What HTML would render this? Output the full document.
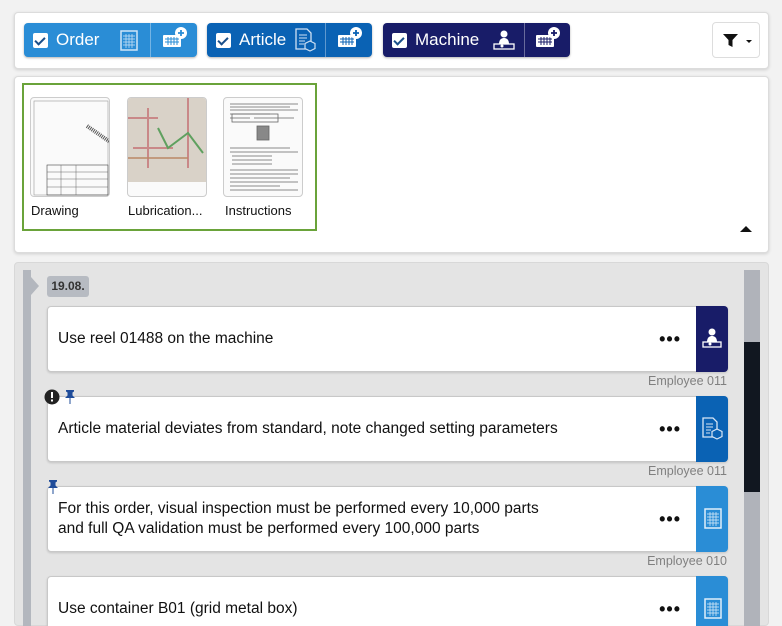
<!DOCTYPE html><html><head><style>
*{box-sizing:border-box;margin:0;padding:0}
html,body{width:782px;height:626px;overflow:hidden}
body{background:#f2f2f2;font-family:"Liberation Sans",sans-serif;position:relative}
.a{position:absolute}
.card{background:#fff;border:1px solid #dcdcdc;border-radius:4px;box-shadow:0 1px 3px rgba(0,0,0,.15)}
.btn{position:absolute;top:23px;height:34px;border-radius:4px;color:#fff;font-size:17px;box-shadow:0 1px 2px rgba(0,0,0,.3)}
.btn .cb{position:absolute;left:9px;top:10px;width:15px;height:15px;background:#fff;border-radius:2px}
.btn .cb:after{content:"";position:absolute;left:4px;top:2px;width:4px;height:8px;border:solid #1a4f8a;border-width:0 2px 2px 0;transform:rotate(45deg)}
.btn .lb{position:absolute;left:32px;top:7px}
.btn .sp{position:absolute;top:0;bottom:0;width:1px;background:rgba(255,255,255,.35)}
.thumb{position:absolute;top:97px;width:80px;height:100px;border:1px solid #ccc;border-radius:4px;background:#fafafa;overflow:hidden}
.tl{position:absolute;top:203px;font-size:13px;color:#111}
.note{position:absolute;left:47px;width:681px;height:66px;background:#fff;border:1px solid #c8c8c8;border-radius:4px;box-shadow:0 1px 2px rgba(0,0,0,.15);font-size:15.5px;color:#111}
.note .t{position:absolute;left:10px;top:50%;transform:translateY(-50%);line-height:20px}
.note .d{position:absolute;right:46px;top:22px;font-size:18px;letter-spacing:1px;font-weight:bold}
.note .s{position:absolute;right:-1px;top:-1px;bottom:-1px;width:32px;border-radius:0 4px 4px 0}
.emp{position:absolute;right:55px;font-size:12.5px;color:#808080}
.pin{z-index:5}
</style></head><body>
<div class="a card" style="left:14px;top:12px;width:755px;height:57px"></div>
<div class="btn" style="left:24px;width:173px;background:#2a8dd6"><div class="cb"></div><div class="lb">Order</div>
<svg class="a" style="left:96px;top:7px" width="18" height="21"><rect x="1" y="1" width="16" height="19" fill="none" stroke="#cfe5f7" stroke-width="1.5"/><path d="M3 6h12M3 9h12M3 12h12M3 15h12M6 4v14M9 4v14M12 4v14" stroke="#cfe5f7" stroke-width=".7"/></svg>
<div class="sp" style="left:126px"></div>
<svg class="a" style="left:138px;top:3px" width="26" height="24"><rect x="1" y="9" width="18" height="12" rx="1" fill="#fff"/><path d="M3 13h14M3 16h14M6 11v8M9 11v8M12 11v8M15 11v8" stroke="#2a8dd6" stroke-width="1"/><circle cx="19" cy="7" r="6" fill="#fff"/><path d="M19 4v6M16 7h6" stroke="#2a8dd6" stroke-width="1.8"/></svg></div>
<div class="btn" style="left:207px;width:165px;background:#0a62b4"><div class="cb"></div><div class="lb">Article</div>
<svg class="a" style="left:88px;top:5px" width="22" height="24"><path d="M1 1h11l4 4v16H1z" fill="none" stroke="#cfe0f3" stroke-width="1.3"/><path d="M4 7h8M4 10h8M4 13h6M4 16h5" stroke="#cfe0f3"/><path d="M15 13l5 2.5v5L15 23l-5-2.5v-5z" fill="#0a62b4" stroke="#cfe0f3" stroke-width="1.2"/></svg>
<div class="sp" style="left:118px"></div>
<svg class="a" style="left:130px;top:3px" width="26" height="24"><rect x="1" y="9" width="18" height="12" rx="1" fill="#fff"/><path d="M3 13h14M3 16h14M6 11v8M9 11v8M12 11v8M15 11v8" stroke="#0a62b4" stroke-width="1"/><circle cx="19" cy="7" r="6" fill="#fff"/><path d="M19 4v6M16 7h6" stroke="#0a62b4" stroke-width="1.8"/></svg></div>
<div class="btn" style="left:383px;width:187px;background:#181c68"><div class="cb"></div><div class="lb">Machine</div>
<svg class="a" style="left:110px;top:6px" width="22" height="22"><circle cx="11" cy="5" r="3.5" fill="#fff"/><path d="M6 15c0-5 3-6 5-6s5 1 5 6z" fill="#fff"/><rect x="1" y="15" width="20" height="5" fill="none" stroke="#fff" stroke-width="1.3"/><circle cx="9" cy="17" r="1.5" fill="#fff"/></svg>
<div class="sp" style="left:141px"></div>
<svg class="a" style="left:152px;top:3px" width="26" height="24"><rect x="1" y="9" width="18" height="12" rx="1" fill="#fff"/><path d="M3 13h14M3 16h14M6 11v8M9 11v8M12 11v8M15 11v8" stroke="#181c68" stroke-width="1"/><circle cx="19" cy="7" r="6" fill="#fff"/><path d="M19 4v6M16 7h6" stroke="#181c68" stroke-width="1.8"/></svg></div>
<div class="a" style="left:712px;top:22px;width:48px;height:36px;border:1px solid #ddd;border-radius:4px;background:#fff">
<svg class="a" style="left:10px;top:11px" width="30" height="14"><path d="M0 0h15l-5.5 6v7l-4-2V6z" fill="#111"/><path d="M23 6h6l-3 3z" fill="#111"/></svg></div>

<div class="a card" style="left:14px;top:76px;width:755px;height:177px"></div>
<div class="a" style="left:22px;top:83px;width:295px;height:148px;border:2px solid #6aa33a"></div>
<div class="thumb" style="left:30px"><svg width="80" height="100"><rect x="3" y="3" width="74" height="94" fill="none" stroke="#999" stroke-width=".6"/><path d="M56 28l26 18" stroke="#555" stroke-width="4" stroke-dasharray="1 1"/><rect x="16" y="67" width="61" height="30" fill="none" stroke="#444" stroke-width=".6"/><path d="M16 74h61M16 81h61M16 89h61M30 67v30M45 67v30" stroke="#666" stroke-width=".5"/></svg></div>
<div class="thumb" style="left:127px"><svg width="80" height="100"><rect width="80" height="84" fill="#d9d2c8"/><path d="M0 20h30M20 10v60M5 50h40M60 0v70" stroke="#c98888" stroke-width="2"/><path d="M30 30l10 20 20 -15 15 20" stroke="#5fa05f" stroke-width="2" fill="none"/><path d="M0 60h60" stroke="#b86" stroke-width="1.5"/></svg></div>
<div class="thumb" style="left:223px"><svg width="80" height="100"><g stroke="#666" stroke-width=".8"><path d="M6 6h68M6 9h60M6 12h68M6 16h40M6 20h20M30 20h20M50 20h20"/><rect x="8" y="16" width="46" height="8" fill="none"/><rect x="33" y="28" width="12" height="14" fill="#888"/><path d="M6 50h60M6 54h68M8 58h40M8 62h40M8 66h40M6 72h68M6 76h68M6 80h60M6 84h68M6 88h50M6 92h68"/></g></svg></div>
<div class="tl" style="left:31px">Drawing</div>
<div class="tl" style="left:128px">Lubrication...</div>
<div class="tl" style="left:225px">Instructions</div>
<svg class="a" style="left:739px;top:224px" width="14" height="10"><path d="M1 8L7 2l6 6z" fill="#111"/></svg>

<div class="a" style="left:14px;top:262px;width:755px;height:364px;background:#e4e4e4;border:1px solid #d8d8d8;border-radius:4px"></div>
<div class="a" style="left:23px;top:270px;width:8px;height:356px;background:#b3b7be"></div>
<svg class="a" style="left:31px;top:277px" width="10" height="18"><path d="M0 0l8 9-8 9z" fill="#b3b7be"/></svg>
<div class="a" style="left:47px;top:276px;width:42px;height:21px;background:#b7bbc2;border-radius:3px;font-size:12px;font-weight:bold;color:#333;line-height:21px;text-align:center">19.08.</div>
<div class="a" style="left:744px;top:270px;width:16px;height:356px;background:#b0b3ba"></div>
<div class="a" style="left:744px;top:342px;width:16px;height:150px;background:#111720"></div>

<div class="note" style="top:306px"><div class="t">Use reel 01488 on the machine</div><div class="d">•••</div><div class="s" style="background:#181c68"><svg style="position:absolute;left:6px;top:21px" width="20" height="22"><circle cx="10" cy="5" r="3.5" fill="#fff"/><path d="M5 15c0-5 3-6 5-6s5 1 5 6z" fill="#fff"/><rect x="1" y="15" width="18" height="5" fill="none" stroke="#fff" stroke-width="1.3"/><circle cx="8" cy="17" r="1.5" fill="#fff"/></svg></div></div>
<div class="emp" style="top:374px">Employee 011</div>
<div class="note" style="top:396px"><div class="t">Article material deviates from standard, note changed setting parameters</div><div class="d">•••</div><div class="s" style="background:#0a62b4"><svg style="position:absolute;left:6px;top:21px" width="22" height="24"><path d="M1 1h10l4 4v15H1z" fill="none" stroke="#d8e6f5" stroke-width="1.3"/><path d="M4 7h7M4 10h7M4 13h5M4 16h4" stroke="#d8e6f5"/><path d="M15 12l5 2.5v5L15 22l-5-2.5v-5z" fill="#0a62b4" stroke="#d8e6f5" stroke-width="1.2"/></svg></div></div>
<svg class="a pin" style="left:44px;top:388px" width="36" height="18"><circle cx="8" cy="9" r="7.5" fill="#222"/><rect x="7" y="4" width="2" height="6" fill="#fff"/><rect x="7" y="11.5" width="2" height="2" fill="#fff"/><path d="M22 2h8v1.5l-1.5 1v3l2.5 2.5h-10l2.5-2.5v-3l-1.5-1z M25.5 10h1v6h-1z" fill="#1f4c9a"/></svg>
<div class="emp" style="top:464px">Employee 011</div>
<div class="note" style="top:486px"><div class="t">For this order, visual inspection must be performed every 10,000 parts<br>and full QA validation must be performed every 100,000 parts</div><div class="d">•••</div><div class="s" style="background:#2a8dd6"><svg style="position:absolute;left:8px;top:21px" width="18" height="23"><rect x="1" y="2" width="16" height="19" fill="none" stroke="#e0eefa" stroke-width="1.5"/><path d="M3 7h12M3 10h12M3 13h12M3 16h12M6 5v14M9 5v14M12 5v14" stroke="#e0eefa" stroke-width=".7"/></svg></div></div>
<svg class="a pin" style="left:46px;top:478px" width="16" height="18"><path d="M3 2h8v1.5l-1.5 1v3l2.5 2.5h-10l2.5-2.5v-3l-1.5-1z M6.5 10h1v6h-1z" fill="#1f4c9a"/></svg>
<div class="emp" style="top:554px">Employee 010</div>
<div class="note" style="top:576px"><div class="t">Use container B01 (grid metal box)</div><div class="d">•••</div><div class="s" style="background:#2a8dd6"><svg style="position:absolute;left:8px;top:21px" width="18" height="23"><rect x="1" y="2" width="16" height="19" fill="none" stroke="#e0eefa" stroke-width="1.5"/><path d="M3 7h12M3 10h12M3 13h12M3 16h12M6 5v14M9 5v14M12 5v14" stroke="#e0eefa" stroke-width=".7"/></svg></div></div>
</body></html>
